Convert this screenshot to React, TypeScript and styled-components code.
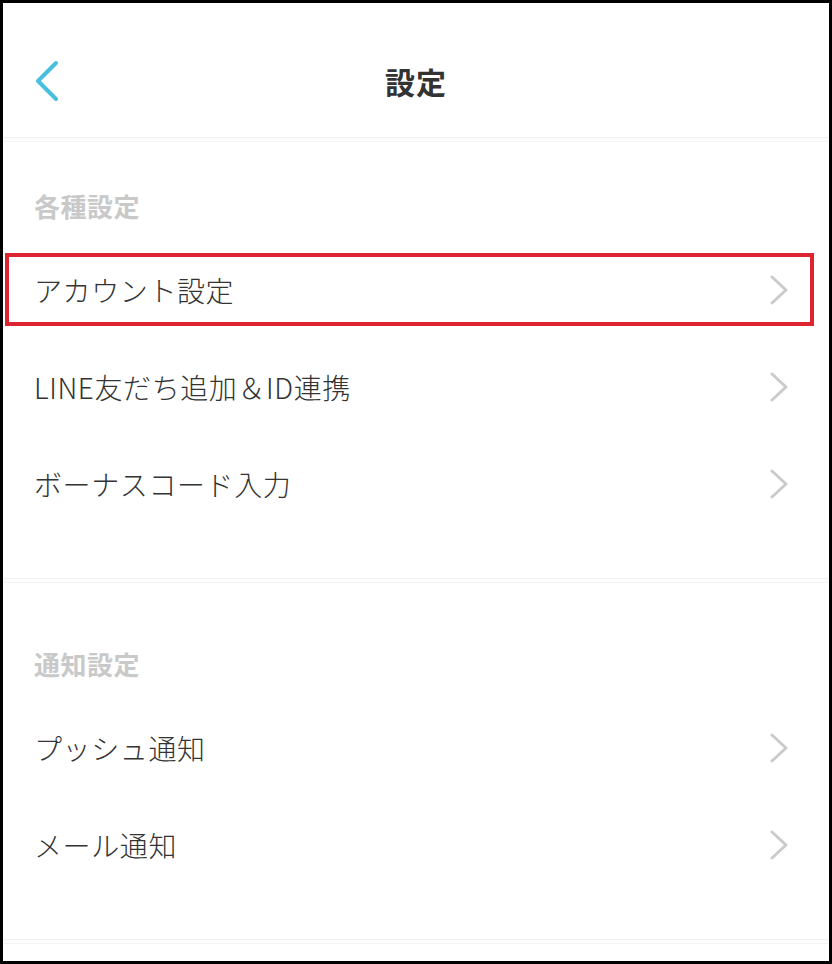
import React from "react";
import styled, { createGlobalStyle } from "styled-components";

const GlobalStyle = createGlobalStyle`
  html, body {
    margin: 0;
    padding: 0;
    background: #fff;
  }
  body {
    font-family: "Noto Sans CJK JP", "Noto Sans", sans-serif;
  }
`;

const Frame = styled.div`
  width: 832px;
  height: 964px;
  box-sizing: border-box;
  border: 3px solid #000;
  background: #fff;
  overflow: hidden;
  display: flex;
  flex-direction: column;
`;

const Header = styled.header`
  height: 134px;
  box-sizing: border-box;
  padding: 22px 0 0 31px;
  display: grid;
  grid-template-columns: 1fr auto 1fr;
  align-items: center;
`;

const BackButton = styled.button`
  justify-self: start;
  border: 0;
  background: none;
  padding: 0;
  display: flex;
  cursor: pointer;
`;

const Title = styled.h1`
  margin: 0 31px 0 0;
  font-size: 30px;
  font-weight: 700;
  color: #333;
  letter-spacing: 1px;
`;

const Divider = styled.div`
  height: 3px;
  border-top: 1px solid #f1f1f1;
  border-bottom: 1px solid #f4f4f4;
  background: #fdfdfd;
`;

const Section = styled.section<{ $top: number }>`
  padding-top: ${(p) => p.$top}px;
  padding-bottom: 46px;
`;

const SectionLabel = styled.h2`
  margin: 0 0 16px;
  padding: 0 31px;
  line-height: 38px;
  font-size: 26px;
  font-weight: 700;
  color: #c9c9c9;
  letter-spacing: 0.5px;
`;

const Row = styled.a<{ $active?: boolean }>`
  position: relative;
  height: 97px;
  padding: 0 41px 0 31px;
  display: flex;
  align-items: center;
  justify-content: space-between;
  text-decoration: none;
  color: #333;
  font-size: 28px;
  font-weight: 300;
  letter-spacing: 0.6px;
  cursor: pointer;

  ${(p) =>
    p.$active &&
    `
    &::after {
      content: "";
      position: absolute;
      top: 12px;
      bottom: 12px;
      left: 2px;
      right: 15px;
      border: 4px solid #dc2530;
      pointer-events: none;
    }
  `}
`;

const Back = () => (
  <svg width="26" height="42" viewBox="0 0 26 42">
    <polyline
      points="22,3 4,21 22,39"
      fill="none"
      stroke="#46c0dc"
      strokeWidth="4"
      strokeLinecap="round"
      strokeLinejoin="round"
    />
  </svg>
);

const Chevron = () => (
  <svg width="18" height="30" viewBox="0 0 18 30">
    <polyline
      points="2,2 16,15 2,28"
      fill="none"
      stroke="#cbcbcb"
      strokeWidth="3"
      strokeLinecap="round"
      strokeLinejoin="round"
    />
  </svg>
);

type Item = { label: string; active?: boolean };

const sections: { title: string; top: number; items: Item[] }[] = [
  {
    title: "各種設定",
    top: 45,
    items: [
      { label: "アカウント設定", active: true },
      { label: "LINE友だち追加＆ID連携" },
      { label: "ボーナスコード入力" },
    ],
  },
  {
    title: "通知設定",
    top: 62,
    items: [{ label: "プッシュ通知" }, { label: "メール通知" }],
  },
];

export default function App() {
  return (
    <>
      <GlobalStyle />
      <Frame>
        <Header>
          <BackButton aria-label="戻る">
            <Back />
          </BackButton>
          <Title>設定</Title>
          <span />
        </Header>
        <Divider />
        {sections.map((section) => (
          <React.Fragment key={section.title}>
            <Section $top={section.top}>
              <SectionLabel>{section.title}</SectionLabel>
              {section.items.map((item) => (
                <Row key={item.label} $active={item.active}>
                  <span>{item.label}</span>
                  <Chevron />
                </Row>
              ))}
            </Section>
            <Divider />
          </React.Fragment>
        ))}
      </Frame>
    </>
  );
}
